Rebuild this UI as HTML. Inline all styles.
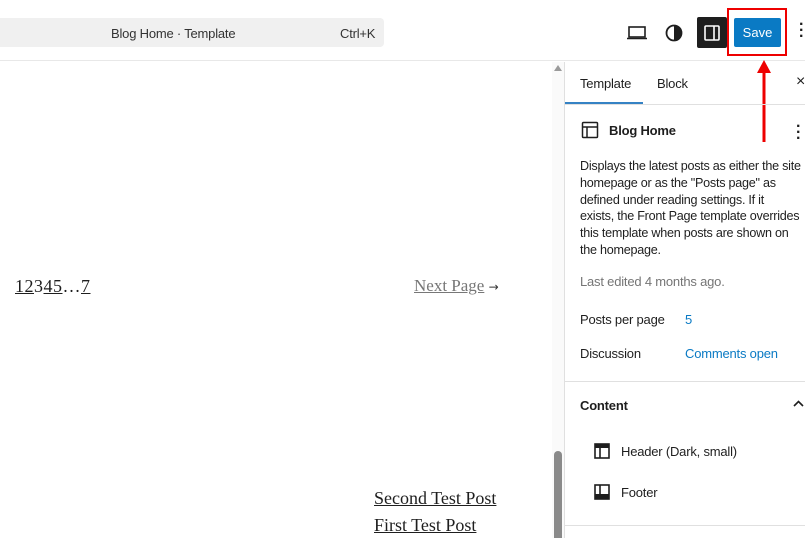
<!DOCTYPE html>
<html><head><style>
*{margin:0;padding:0;box-sizing:border-box}
body{width:805px;height:538px;overflow:hidden;background:#fff;font-family:"Liberation Sans",sans-serif;color:#1e1e1e;position:relative}
.a{position:absolute}
.serif{font-family:"Liberation Serif",serif}
.s{font-size:13px;letter-spacing:-0.2px}
</style></head><body>
<div class="a" style="left:0;top:0;width:805px;height:61px;border-bottom:1px solid #e8e8e8"></div>
<div class="a" style="left:-10px;top:18px;width:394px;height:29px;background:#f0f0f0;border-radius:4px"></div>
<div class="a s" style="left:111px;top:26px;color:#333">Blog Home · Template</div>
<div class="a s" style="left:340px;top:26px;color:#333">Ctrl+K</div>
<svg class="a" style="left:625px;top:23px" width="24" height="20" viewBox="0 0 24 20"><rect x="4" y="4" width="16" height="10" fill="none" stroke="#1e1e1e" stroke-width="1.6"/><path d="M2 15.5h20" stroke="#1e1e1e" stroke-width="1.6"/></svg>
<svg class="a" style="left:664px;top:23px" width="20" height="20" viewBox="0 0 20 20"><circle cx="10" cy="10" r="7.5" fill="none" stroke="#1e1e1e" stroke-width="1.8"/><path d="M10 2.5a7.5 7.5 0 0 1 0 15z" fill="#1e1e1e"/></svg>
<div class="a" style="left:697px;top:17px;width:30px;height:31px;background:#1e1e1e;border-radius:2px"></div>
<svg class="a" style="left:702px;top:23px" width="20" height="20" viewBox="0 0 20 20"><rect x="3" y="3" width="14" height="14" rx="1" fill="none" stroke="#fff" stroke-width="1.6"/><path d="M12 3v14" stroke="#fff" stroke-width="1.6"/></svg>
<div class="a" style="left:727px;top:8px;width:60px;height:48px;border:2px solid #e00"></div>
<div class="a" style="left:734px;top:18px;width:47px;height:29px;background:#0a7ac4;border-radius:2px;color:#fff;font-size:13px;text-align:center;line-height:29px">Save</div>
<div class="a" style="left:799px;top:22px;font-size:16px;line-height:6px;font-weight:bold">·<br>·<br>·</div>
<svg class="a" style="left:755px;top:58px" width="18" height="86" viewBox="0 0 18 86"><path d="M9 84V12" stroke="#e00" stroke-width="3"/><path d="M2 15L9 2L16 15z" fill="#e00"/></svg>
<div class="a serif" style="left:15px;top:276px;font-size:18px;color:#1e1e1e;letter-spacing:0.5px"><u>1</u><u>2</u>3<u>4</u><u>5</u>…<u>7</u></div>
<div class="a serif" style="left:414px;top:276px;font-size:17px;color:#777"><u>Next Page</u> <span style="font-family:'DejaVu Sans';font-size:12px;color:#333">→</span></div>
<div class="a serif" style="left:374px;top:488px;font-size:18px"><u>Second Test Post</u></div>
<div class="a serif" style="left:374px;top:515px;font-size:18px"><u>First Test Post</u></div>
<div class="a" style="left:552px;top:62px;width:12px;height:476px;background:#fafafa"></div>
<div class="a" style="left:554px;top:65px;width:0;height:0;border-left:4px solid transparent;border-right:4px solid transparent;border-bottom:6px solid #9a9a9a"></div>
<div class="a" style="left:554px;top:451px;width:8px;height:87px;background:#8a8a8a;border-radius:4px 4px 0 0"></div>
<div class="a" style="left:564px;top:62px;width:1px;height:476px;background:#e0e0e0"></div>
<div class="a" style="left:565px;top:104px;width:240px;height:1px;background:#e0e0e0"></div>
<div class="a" style="left:565px;top:102px;width:78px;height:2px;background:#3582c4"></div>
<div class="a s" style="left:580px;top:76px">Template</div>
<div class="a s" style="left:657px;top:76px">Block</div>
<div class="a" style="left:796px;top:73px;font-size:16px">×</div>
<svg class="a" style="left:581px;top:121px" width="18" height="18" viewBox="0 0 18 18"><rect x="1.5" y="1.5" width="15" height="15" rx="1" fill="none" stroke="#1e1e1e" stroke-width="1.5"/><path d="M1.5 6h15M6 6v10.5" stroke="#1e1e1e" stroke-width="1.5"/></svg>
<div class="a s" style="left:609px;top:123px;font-weight:bold">Blog Home</div>
<div class="a" style="left:796px;top:124px;font-size:16px;line-height:6px;font-weight:bold">·<br>·<br>·</div>
<div class="a" style="left:580px;top:158px;white-space:nowrap;font-size:12.6px;letter-spacing:-0.25px;line-height:16.8px;color:#1e1e1e">Displays the latest posts as either the site<br>homepage or as the "Posts page" as<br>defined under reading settings. If it<br>exists, the Front Page template overrides<br>this template when posts are shown on<br>the homepage.</div>
<div class="a s" style="left:580px;top:274px;color:#757575">Last edited 4 months ago.</div>
<div class="a s" style="left:580px;top:312px">Posts per page</div>
<div class="a s" style="left:685px;top:312px;color:#0a7ac4">5</div>
<div class="a s" style="left:580px;top:346px">Discussion</div>
<div class="a s" style="left:685px;top:346px;color:#0a7ac4">Comments open</div>
<div class="a" style="left:565px;top:381px;width:240px;height:1px;background:#e0e0e0"></div>
<div class="a s" style="left:580px;top:398px;font-weight:bold">Content</div>
<svg class="a" style="left:792px;top:399px" width="13" height="10" viewBox="0 0 13 10"><path d="M2 7l4.5-4.5L11 7" fill="none" stroke="#1e1e1e" stroke-width="1.6"/></svg>
<svg class="a" style="left:594px;top:443px" width="16" height="16" viewBox="0 0 16 16"><rect x="1" y="1" width="14" height="14" fill="none" stroke="#1e1e1e" stroke-width="1.6"/><rect x="1" y="1" width="14" height="4" fill="#1e1e1e"/><path d="M6 5v10" stroke="#1e1e1e" stroke-width="1.6"/></svg>
<div class="a s" style="left:621px;top:444px">Header (Dark, small)</div>
<svg class="a" style="left:594px;top:484px" width="16" height="16" viewBox="0 0 16 16"><rect x="1" y="1" width="14" height="14" fill="none" stroke="#1e1e1e" stroke-width="1.6"/><rect x="1" y="10" width="14" height="5" fill="#1e1e1e"/><path d="M6 1v9" stroke="#1e1e1e" stroke-width="1.6"/></svg>
<div class="a s" style="left:621px;top:485px">Footer</div>
<div class="a" style="left:565px;top:525px;width:240px;height:1px;background:#e0e0e0"></div>
</body></html>
